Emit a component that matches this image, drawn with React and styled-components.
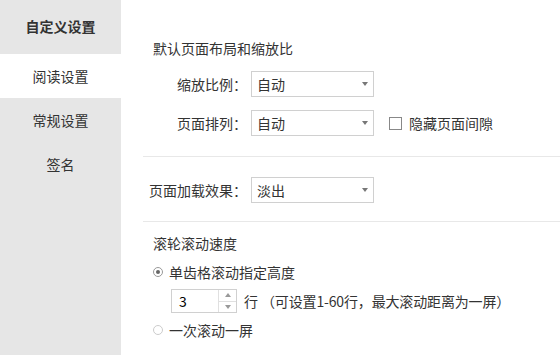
import React from 'react';
import styled, { createGlobalStyle } from 'styled-components';

const Global = createGlobalStyle`
  html, body { margin: 0; padding: 0; background: #fff; }
  body {
    font-family: "Noto Sans CJK SC", "Noto Sans", sans-serif;
    font-size: 14px;
    color: #333;
  }
`;

const Page = styled.div`
  display: flex;
  width: 560px;
  height: 355px;
  overflow: hidden;
`;

const Sidebar = styled.div`
  width: 121px;
  flex-shrink: 0;
  background: #e6e6e6;
  display: flex;
  flex-direction: column;
`;

const SideTitle = styled.div`
  height: 54px;
  line-height: 53px;
  text-align: center;
  font-weight: bold;
  color: #333;
`;

const SideItem = styled.div`
  height: 44px;
  line-height: 45px;
  text-align: center;
  color: #333;
  background: ${p => (p.active ? '#fff' : 'transparent')};
`;

const Main = styled.div`
  flex: 1;
  padding-left: 22px;
`;

const Section = styled.div`
  padding: ${p => p.pad || '0'};
  border-bottom: ${p => (p.last ? 'none' : '1px solid #e8e8e8')};
`;

const Heading = styled.div`
  padding-left: 10px;
  line-height: 20px;
`;

const Row = styled.div`
  display: flex;
  align-items: center;
  height: 26px;
  line-height: 20px;
  margin-top: ${p => p.mt || 0}px;
`;

const Label = styled.div`
  width: 108px;
  text-align: right;
  padding-right: 4px;
  box-sizing: border-box;
  white-space: nowrap;
`;

const Select = styled.div`
  width: 123px;
  height: 26px;
  box-sizing: border-box;
  border: 1px solid #d0d0d0;
  display: flex;
  align-items: center;
  justify-content: space-between;
  padding: 0 5px 0 5px;
`;

const Caret = styled.span`
  width: 0;
  height: 0;
  border-left: 3.5px solid transparent;
  border-right: 3.5px solid transparent;
  border-top: 4px solid #777;
`;

const Check = styled.label`
  display: flex;
  align-items: center;
  margin-left: 15px;
  gap: 7px;
`;

const Box = styled.span`
  width: 11px;
  height: 11px;
  border: 1px solid #888;
  background: #fff;
`;

const Radio = styled.div`
  display: flex;
  align-items: center;
  gap: 6px;
  padding-left: 10px;
  line-height: 20px;
  margin-top: ${p => p.mt || 0}px;
`;

const Dot = styled.span`
  width: 10px;
  height: 10px;
  border-radius: 50%;
  box-sizing: border-box;
  border: 1px solid ${p => (p.on ? '#999' : '#ccc')};
  display: flex;
  align-items: center;
  justify-content: center;
  &::after {
    content: '';
    width: 4px;
    height: 4px;
    border-radius: 50%;
    background: ${p => (p.on ? '#666' : 'transparent')};
  }
`;

const SpinRow = styled.div`
  display: flex;
  align-items: center;
  padding-left: 28px;
  margin-top: 7px;
  gap: 7px;
  line-height: 20px;
`;

const Spinner = styled.div`
  width: 66px;
  height: 24px;
  box-sizing: border-box;
  border: 1px solid #d0d0d0;
  display: flex;
`;

const SpinValue = styled.div`
  flex: 1;
  padding-left: 7px;
  line-height: 22px;
  color: #000;
`;

const SpinBtns = styled.div`
  width: 17px;
  border-left: 1px solid #e0e0e0;
  display: flex;
  flex-direction: column;
`;

const SpinBtn = styled.div`
  flex: 1;
  display: flex;
  align-items: center;
  justify-content: center;
  border-top: ${p => (p.down ? '1px solid #e0e0e0' : 'none')};
  &::after {
    content: '';
    border-left: 3px solid transparent;
    border-right: 3px solid transparent;
    ${p => (p.down ? 'border-top: 4px solid #999;' : 'border-bottom: 4px solid #999;')}
  }
`;

const Note = styled.span`
  margin-left: -4px;
  letter-spacing: -0.15px;
`;

export default function App() {
  return (
    <Page>
      <Global />
      <Sidebar>
        <SideTitle>自定义设置</SideTitle>
        <SideItem active>阅读设置</SideItem>
        <SideItem>常规设置</SideItem>
        <SideItem>签名</SideItem>
      </Sidebar>
      <Main>
        <Section pad="38px 0 20px 0">
          <Heading>默认页面布局和缩放比</Heading>
          <Row mt={13}>
            <Label>缩放比例：</Label>
            <Select>自动<Caret /></Select>
          </Row>
          <Row mt={13}>
            <Label>页面排列：</Label>
            <Select>自动<Caret /></Select>
            <Check><Box />隐藏页面间隙</Check>
          </Row>
        </Section>
        <Section pad="20px 0 18px 0">
          <Row>
            <Label>页面加载效果：</Label>
            <Select>淡出<Caret /></Select>
          </Row>
        </Section>
        <Section last pad="11px 0 0 0">
          <Heading>滚轮滚动速度</Heading>
          <Radio mt={9}><Dot on />单齿格滚动指定高度</Radio>
          <SpinRow>
            <Spinner>
              <SpinValue>3</SpinValue>
              <SpinBtns>
                <SpinBtn />
                <SpinBtn down />
              </SpinBtns>
            </Spinner>
            行<Note>（可设置1-60行，最大滚动距离为一屏）</Note>
          </SpinRow>
          <Radio mt={7}><Dot />一次滚动一屏</Radio>
        </Section>
      </Main>
    </Page>
  );
}
